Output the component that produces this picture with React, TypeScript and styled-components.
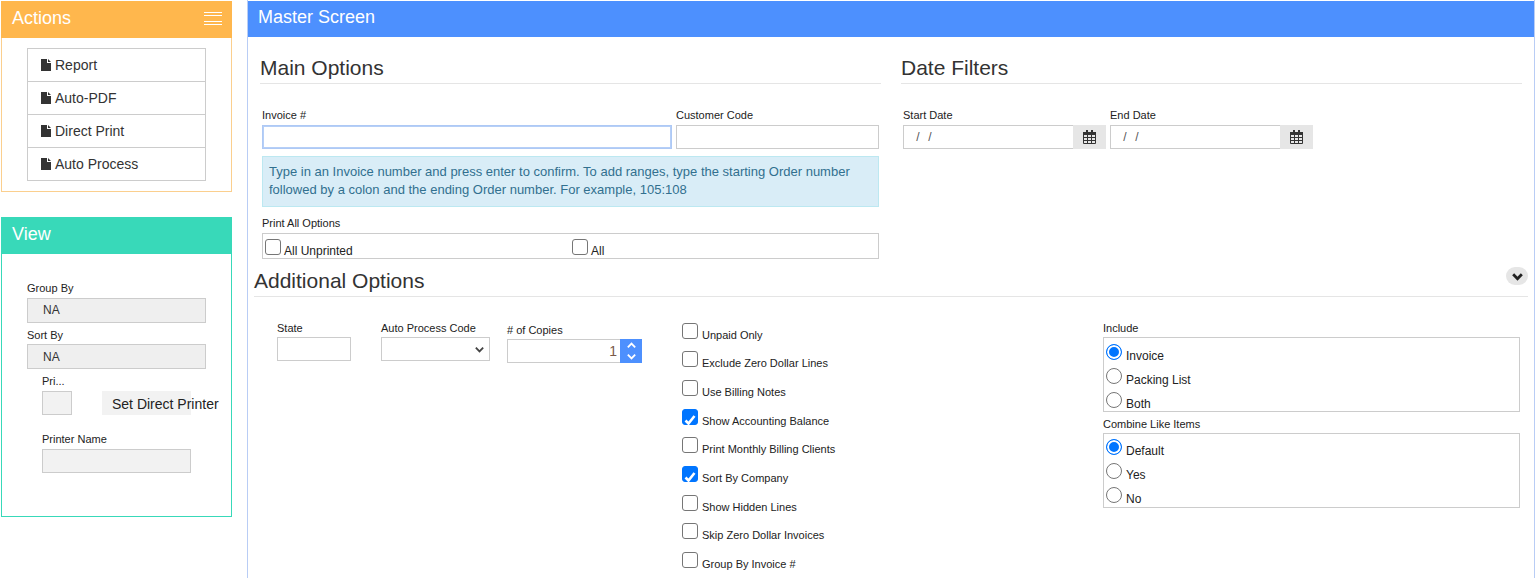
import React from 'react';
import styled, { createGlobalStyle } from 'styled-components';

const GlobalStyle = createGlobalStyle`
  html, body {
    margin: 0;
    padding: 0;
    height: 578px;
    overflow: hidden;
    background: #fff;
    font-family: "Liberation Sans", Arial, sans-serif;
    color: #333;
  }
  * { box-sizing: border-box; }
`;

const Page = styled.div`
  display: flex;
  width: 1536px;
  height: 578px;
  overflow: hidden;
`;

const Sidebar = styled.aside`
  flex: 0 0 247px;
  padding: 1px 15px 0 1px;
  display: flex;
  flex-direction: column;
  gap: 25px;
`;

const Panel = styled.section<{ $color: string; $height: number }>`
  height: ${(p) => p.$height}px;
  border: 1px solid ${(p) => p.$color};
  border-top: 0;
`;

const PanelHead = styled.header<{ $color: string }>`
  height: 37px;
  margin: 0 -1px;
  padding: 0 10px 2px 11px;
  background: ${(p) => p.$color};
  color: #fff;
  font-size: 18px;
  display: flex;
  align-items: center;
  justify-content: space-between;
`;

const MenuLines = styled.span`
  width: 18px;
  height: 13px;
  border-top: 1px solid #fff;
  border-bottom: 1px solid #fff;
  display: flex;
  align-items: center;
  &::before {
    content: '';
    width: 100%;
    height: 5px;
    border-top: 1px solid #fff;
    border-bottom: 1px solid #fff;
  }
`;

const ActionList = styled.ul`
  list-style: none;
  margin: 10px 25px 0;
  padding: 0;
  border: 1px solid #ccc;
  border-bottom: 0;
`;

const ActionItem = styled.li`
  height: 33px;
  padding-left: 13px;
  border-bottom: 1px solid #ccc;
  display: flex;
  align-items: center;
  gap: 4px;
  font-size: 14px;
  color: #333;
`;

const ViewBody = styled.div`
  padding: 28px 25px 0;
`;

const SmallLabel = styled.label`
  display: block;
  font-size: 11px;
  line-height: 13px;
  color: #222;
  white-space: nowrap;
`;

const ReadOnlyField = styled.div`
  height: 25px;
  margin: 3px 0 6px;
  padding-left: 15px;
  border: 1px solid #ccc;
  background: #efefef;
  font-size: 12px;
  line-height: 23px;
  color: #333;
  & + label + & {
    margin-top: 2px;
    line-height: 25px;
  }
`;

const PrinterBlock = styled.div`
  padding: 0 15px;
`;

const PrinterRow = styled.div`
  display: flex;
  gap: 30px;
  margin: 3px 0 18px;
`;

const PrinterInput = styled.div<{ $width: number }>`
  width: ${(p) => p.$width}px;
  height: 24px;
  border: 1px solid #ccc;
  background: #f2f2f2;
`;

const PrinterNameInput = styled(PrinterInput)`
  margin-top: 3px;
`;

const PrinterButton = styled.button`
  width: 89px;
  height: 24px;
  padding: 2px 0 0 10px;
  border: 0;
  background: #f2f2f2;
  font: 14px "Liberation Sans", Arial, sans-serif;
  color: #222;
  text-align: left;
  white-space: nowrap;
`;

const Main = styled.main`
  flex: 1;
  margin-right: 1px;
  padding-top: 1px;
  border-right: 1px solid #b9cdf5;
  border-left: 1px solid #b9cdf5;
`;

const MainHead = styled.header`
  height: 36px;
  padding: 0 0 3px 10px;
  background: #4d90fe;
  color: #fff;
  font-size: 18px;
  display: flex;
  align-items: center;
`;

const TopColumns = styled.div`
  display: grid;
  grid-template-columns: 621px 621px;
  column-gap: 20px;
  padding: 19px 0 0 12px;
`;

const Heading = styled.h2`
  margin: 0;
  height: 28px;
  border-bottom: 1px solid #e5e5e5;
  font-size: 21px;
  line-height: 24px;
  font-weight: 400;
  color: #333;
`;

const Fields = styled.div`
  padding: 25px 2px 0;
`;

const FieldRow = styled.div`
  display: flex;
  gap: 4px;
`;

const Field = styled.div<{ $width: number }>`
  width: ${(p) => p.$width}px;
`;

const TextBox = styled.div<{ $focus?: boolean; $width?: number }>`
  width: ${(p) => (p.$width ? `${p.$width}px` : 'auto')};
  height: 24px;
  margin-top: 3px;
  border: 1px solid ${(p) => (p.$focus ? '#aec9f5' : '#ccc')};
  box-shadow: ${(p) => (p.$focus ? 'inset 0 0 0 1px #b6cff7' : 'none')};
  background: #fff;
`;

const InfoBox = styled.div`
  height: 51px;
  margin: 7px 0 10px;
  padding: 6px 6px;
  border: 1px solid #bce8f1;
  background: #d9edf7;
  color: #31708f;
  font-size: 13px;
  line-height: 18px;
`;

const OptionBox = styled.div`
  display: flex;
  height: 26px;
  margin-top: 3px;
  padding-left: 2px;
  border: 1px solid #ccc;
`;

const InlineCheck = styled.span<{ $width?: number }>`
  display: flex;
  align-items: flex-start;
  gap: 3px;
  width: ${(p) => (p.$width ? `${p.$width}px` : 'auto')};
  padding-top: 5px;
  font-size: 12px;
  line-height: 13px;
  color: #222;
  span {
    padding-top: 6px;
  }
`;

const Box = styled.span<{ $checked?: boolean }>`
  flex: none;
  width: 16px;
  height: 16px;
  border: 1px solid ${(p) => (p.$checked ? '#0075ff' : '#767676')};
  border-radius: 3px;
  background: ${(p) => (p.$checked ? '#0075ff' : '#fff')};
  display: flex;
  align-items: center;
  justify-content: center;
`;

const DateInput = styled.div`
  display: flex;
  height: 24px;
  margin-top: 3px;
`;

const DateText = styled.div`
  flex: 1;
  padding-left: 8px;
  border: 1px solid #ccc;
  border-right: 0;
  font-size: 12px;
  line-height: 22px;
  word-spacing: 1px;
  color: #555;
  white-space: pre;
`;

const DateAddon = styled.div`
  flex: 0 0 33px;
  background: #e6e6e6;
  display: flex;
  align-items: center;
  justify-content: center;
`;

const AdditionalHead = styled.div`
  position: relative;
  margin: 3px 6px 0;
  height: 35px;
  padding-top: 7px;
  border-bottom: 1px solid #e5e5e5;
  font-size: 21px;
  line-height: 24px;
  color: #333;
`;

const Collapse = styled.button`
  position: absolute;
  top: 5px;
  right: 0;
  width: 22px;
  height: 18px;
  padding: 0;
  border: 0;
  border-radius: 9px;
  background: #e6e6e6;
  display: flex;
  align-items: center;
  justify-content: center;
`;

const Additional = styled.div`
  display: flex;
  padding: 0 0 0 29px;
`;

const SimpleFields = styled.div`
  flex: 0 0 405px;
  display: flex;
  align-items: flex-start;
  padding-top: 25px;
`;

const StateField = styled.div`
  width: 104px;
  ${TextBox} {
    margin-top: 2px;
  }
`;

const AutoField = styled.div`
  width: 126px;
`;

const CopiesField = styled.div`
  width: 135px;
  padding-top: 2px;
`;

const SelectBox = styled.div`
  width: 109px;
  height: 24px;
  margin-top: 2px;
  padding-right: 4px;
  border: 1px solid #ccc;
  display: flex;
  align-items: center;
  justify-content: flex-end;
`;

const SpinnerWrap = styled.div`
  display: flex;
  height: 24px;
  margin-top: 2px;
`;

const SpinnerValue = styled.div`
  width: 113px;
  padding-right: 3px;
  border: 1px solid #ccc;
  border-right: 0;
  font-size: 14px;
  line-height: 22px;
  text-align: right;
  color: #7a5a4a;
`;

const SpinnerButtons = styled.div`
  width: 22px;
  background: #4d90fe;
  display: flex;
  flex-direction: column;
  align-items: center;
  justify-content: center;
`;

const CheckColumn = styled.div`
  flex: 0 0 421px;
  padding-top: 25.8px;
`;

const CheckRow = styled.div`
  display: flex;
  align-items: flex-start;
  gap: 4px;
  height: 28.67px;
  font-size: 11px;
  line-height: 13px;
  color: #222;
  span {
    padding-top: 6px;
  }
`;

const RadioColumn = styled.div`
  width: 417px;
  padding-top: 25px;
`;

const RadioBox = styled.div<{ $top: number }>`
  height: 75px;
  margin: 2px 0 6px;
  padding: ${(p) => p.$top}px 2px 0;
  border: 1px solid #ccc;
  overflow: hidden;
`;

const RadioRow = styled.div`
  display: flex;
  align-items: flex-start;
  gap: 4px;
  height: 24px;
  font-size: 12px;
  line-height: 13px;
  color: #222;
  span {
    padding-top: 6px;
  }
`;

const Radio = styled.span<{ $on?: boolean }>`
  flex: none;
  width: 16px;
  height: 16px;
  border: 1px solid ${(p) => (p.$on ? '#0075ff' : '#767676')};
  border-radius: 50%;
  background: ${(p) => (p.$on ? '#0075ff' : '#fff')};
  box-shadow: ${(p) => (p.$on ? 'inset 0 0 0 2px #fff' : 'none')};
`;

const FileIcon = () => (
  <svg width="10" height="12" viewBox="0 0 10 12" aria-hidden="true">
    <path d="M0 0H6V4H10V12H0Z M7 0L10 3H7Z" fill="#333" />
  </svg>
);

const CalendarIcon = () => (
  <svg width="13" height="14" viewBox="0 0 13 14" aria-hidden="true">
    <path d="M.5 2.5h12v11H.5z" fill="none" stroke="#333" />
    <path d="M0 2h13v3H0z" fill="#333" />
    <path d="M3 0h2v3H3zM8 0h2v3H8z" fill="#333" />
    <path d="M4.5 5v8M8.5 5v8M1 7.5h11M1 10.5h11" stroke="#333" strokeWidth="1" />
  </svg>
);

const Chevron = ({ color, size, weight = 2, up }: { color: string; size: number; weight?: number; up?: boolean }) => (
  <svg width={size} height={size} viewBox="0 0 12 12" aria-hidden="true">
    <path d={up ? 'M2 8L6 4L10 8' : 'M2 4L6 8L10 4'} fill="none" stroke={color} strokeWidth={weight} />
  </svg>
);

const Tick = () => (
  <svg width="14" height="14" viewBox="0 0 14 14" aria-hidden="true">
    <path d="M2.5 7.5L5.5 10.5L11.5 3" fill="none" stroke="#fff" strokeWidth="2.6" />
  </svg>
);

const ACTIONS = ['Report', 'Auto-PDF', 'Direct Print', 'Auto Process'];
const CHECKS: [string, boolean][] = [
  ['Unpaid Only', false],
  ['Exclude Zero Dollar Lines', false],
  ['Use Billing Notes', false],
  ['Show Accounting Balance', true],
  ['Print Monthly Billing Clients', false],
  ['Sort By Company', true],
  ['Show Hidden Lines', false],
  ['Skip Zero Dollar Invoices', false],
  ['Group By Invoice #', false],
];

const RadioGroup = ({ title, items, top }: { title: string; items: string[]; top: number }) => (
  <>
    <SmallLabel>{title}</SmallLabel>
    <RadioBox $top={top}>
      {items.map((item, i) => (
        <RadioRow key={item}>
          <Radio $on={i === 0} />
          <span>{item}</span>
        </RadioRow>
      ))}
    </RadioBox>
  </>
);

const DateField = ({ title }: { title: string }) => (
  <Field $width={203}>
    <SmallLabel>{title}</SmallLabel>
    <DateInput>
      <DateText>{' /  /'}</DateText>
      <DateAddon>
        <CalendarIcon />
      </DateAddon>
    </DateInput>
  </Field>
);

export default function App() {
  return (
    <Page>
      <GlobalStyle />
      <Sidebar>
        <Panel $color="#fbcf8e" $height={191}>
          <PanelHead $color="#ffb74d">
            Actions
            <MenuLines />
          </PanelHead>
          <ActionList>
            {ACTIONS.map((a) => (
              <ActionItem key={a}>
                <FileIcon />
                {a}
              </ActionItem>
            ))}
          </ActionList>
        </Panel>
        <Panel $color="#38d9b9" $height={300}>
          <PanelHead $color="#38d9b9">View</PanelHead>
          <ViewBody>
            <SmallLabel>Group By</SmallLabel>
            <ReadOnlyField>NA</ReadOnlyField>
            <SmallLabel>Sort By</SmallLabel>
            <ReadOnlyField>NA</ReadOnlyField>
            <PrinterBlock>
              <SmallLabel>Pri...</SmallLabel>
              <PrinterRow>
                <PrinterInput $width={30} />
                <PrinterButton>Set Direct Printer</PrinterButton>
              </PrinterRow>
              <SmallLabel>Printer Name</SmallLabel>
              <PrinterNameInput $width={149} />
            </PrinterBlock>
          </ViewBody>
        </Panel>
      </Sidebar>
      <Main>
        <MainHead>Master Screen</MainHead>
        <TopColumns>
          <div>
            <Heading>Main Options</Heading>
            <Fields>
              <FieldRow>
                <Field $width={410}>
                  <SmallLabel>Invoice #</SmallLabel>
                  <TextBox $focus />
                </Field>
                <Field $width={203}>
                  <SmallLabel>Customer Code</SmallLabel>
                  <TextBox />
                </Field>
              </FieldRow>
              <InfoBox>
                Type in an Invoice number and press enter to confirm. To add ranges, type the starting Order number
                followed by a colon and the ending Order number. For example, 105:108
              </InfoBox>
              <SmallLabel>Print All Options</SmallLabel>
              <OptionBox>
                <InlineCheck $width={307}>
                  <Box />
                  <span>All Unprinted</span>
                </InlineCheck>
                <InlineCheck>
                  <Box />
                  <span>All</span>
                </InlineCheck>
              </OptionBox>
            </Fields>
          </div>
          <div>
            <Heading>Date Filters</Heading>
            <Fields>
              <FieldRow>
                <DateField title="Start Date" />
                <DateField title="End Date" />
              </FieldRow>
            </Fields>
          </div>
        </TopColumns>
        <AdditionalHead>
          Additional Options
          <Collapse aria-label="Collapse">
            <Chevron color="#222" size={13} weight={2.6} />
          </Collapse>
        </AdditionalHead>
        <Additional>
          <SimpleFields>
            <StateField>
              <SmallLabel>State</SmallLabel>
              <TextBox $width={74} />
            </StateField>
            <AutoField>
              <SmallLabel>Auto Process Code</SmallLabel>
              <SelectBox>
                <Chevron color="#444" size={11} />
              </SelectBox>
            </AutoField>
            <CopiesField>
              <SmallLabel># of Copies</SmallLabel>
              <SpinnerWrap>
                <SpinnerValue>1</SpinnerValue>
                <SpinnerButtons>
                  <Chevron color="#fff" size={11} up />
                  <Chevron color="#fff" size={11} />
                </SpinnerButtons>
              </SpinnerWrap>
            </CopiesField>
          </SimpleFields>
          <CheckColumn>
            {CHECKS.map(([label, checked]) => (
              <CheckRow key={label}>
                <Box $checked={checked}>{checked && <Tick />}</Box>
                <span>{label}</span>
              </CheckRow>
            ))}
          </CheckColumn>
          <RadioColumn>
            <RadioGroup title="Include" items={['Invoice', 'Packing List', 'Both']} top={6} />
            <RadioGroup title="Combine Like Items" items={['Default', 'Yes', 'No']} top={5} />
          </RadioColumn>
        </Additional>
      </Main>
    </Page>
  );
}
